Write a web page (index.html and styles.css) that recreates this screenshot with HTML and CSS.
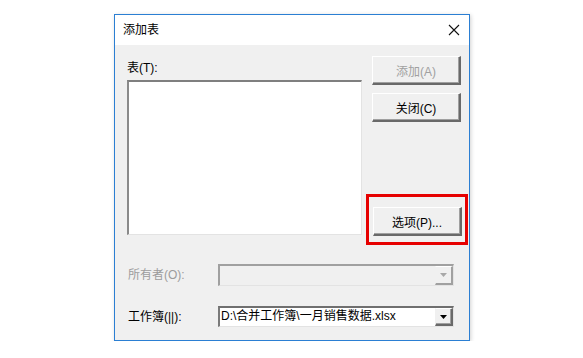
FILE: index.html
```html
<!DOCTYPE html>
<html lang="zh-CN">
<head>
<meta charset="utf-8">
<title>添加表</title>
<link rel="stylesheet" href="styles.css">
</head>
<body>
<div class="dialog">
  <div class="titlebar">
    <span class="title">添加表</span>
    <span class="close">
      <svg width="12" height="12" viewBox="0 0 12 12"><path d="M1 1 L11 11 M11 1 L1 11" stroke="#111" stroke-width="1.1" fill="none"/></svg>
    </span>
  </div>
  <div class="content">
    <div class="top">
      <div class="left">
        <div class="label">表(T):</div>
        <div class="listbox"></div>
      </div>
      <div class="right">
        <button class="btn disabled">添加(A)</button>
        <button class="btn">关闭(C)</button>
        <div class="highlight">
          <button class="btn">选项(P)...</button>
        </div>
      </div>
    </div>
    <div class="row row-owner">
      <span class="row-label disabled-text">所有者(O):</span>
      <div class="combo combo-disabled">
        <span class="combo-text"></span>
        <span class="combo-btn"><svg width="7" height="4" viewBox="0 0 7 4"><path d="M0 0 H7 L3.5 4 Z" fill="#a8a8a8"/></svg></span>
      </div>
    </div>
    <div class="row row-book">
      <span class="row-label">工作簿(||):</span>
      <div class="combo">
        <span class="combo-text">D:\合并工作簿\一月销售数据.xlsx</span>
        <span class="combo-btn"><svg width="7" height="4" viewBox="0 0 7 4"><path d="M0 0 H7 L3.5 4 Z" fill="#000"/></svg></span>
      </div>
    </div>
  </div>
</div>
</body>
</html>
```
FILE: styles.css
```css
* { box-sizing: border-box; }
html, body { margin: 0; padding: 0; background: #fff; }
body {
  font-family: "Liberation Sans", "Noto Sans CJK SC", sans-serif;
  font-size: 12px;
  color: #000;
}
.dialog {
  margin: 14px 0 0 114px;
  width: 356px;
  height: 327px;
  border: 1px solid #2b7fd3;
  background: #f0f0f0;
  box-shadow: 1px 1px 4px rgba(0,0,0,0.18);
  display: flex;
  flex-direction: column;
}
.titlebar {
  height: 30px;
  background: #fff;
  display: flex;
  align-items: center;
  justify-content: space-between;
  padding: 0 9px 0 8px;
}
.title { font-size: 12px; line-height: 16px; }
.close { display: flex; width: 12px; height: 12px; }
.content {
  padding: 11px 8px 0 12px;
  flex: 1;
  display: flex;
  flex-direction: column;
}
.top { display: flex; gap: 10px; align-items: flex-start; }
.left { width: 235px; padding-top: 4px; display: flex; flex-direction: column; }
.label { line-height: 16px; height: 16px; margin-bottom: 4px; }
.listbox {
  height: 155px;
  background: #fff;
  border-style: solid;
  border-width: 2px 1px 1px 2px;
  border-color: #7f7f7f #e3e3e3 #e3e3e3 #8a8a8a;
}
.right { width: 89px; display: flex; flex-direction: column; }
.btn {
  width: 89px;
  height: 29px;
  font: inherit;
  font-size: 12px;
  color: #000;
  background: #f0f0f0;
  border-style: solid;
  border-width: 1px 2px 2px 1px;
  border-color: #fff #696969 #696969 #fff;
  box-shadow: inset -1px -1px 0 #a0a0a0;
  padding: 0;
  margin: 0;
}
.btn + .btn { margin-top: 8px; }
.btn.disabled { color: #a0a0a0; }
.highlight {
  margin: 72px -7px -10px -6px;
  border: 3px solid #e60000;
  padding: 10px 4px 6px 4px;
}
.row { display: flex; align-items: center; }
.row-owner { margin-top: 29px; }
.row-book { margin-top: 20px; }
.row-label { width: 91px; line-height: 16px; padding-left: 1px; }
.disabled-text { color: #9c9c9c; }
.combo {
  width: 236px;
  height: 22px;
  display: flex;
  align-items: stretch;
  background: #fff;
  border-style: solid;
  border-width: 2px 1px 1px 2px;
  border-color: #6f6f6f #e3e3e3 #e3e3e3 #7a7a7a;
}
.row-book .combo { height: 21px; }
.combo-disabled { background: #f0f0f0; border-color: #a0a0a0 #e3e3e3 #e3e3e3 #a0a0a0; }
.combo-text { flex: 1; line-height: 17px; padding-left: 1px; white-space: nowrap; overflow: hidden; }
.combo-btn {
  width: 18px;
  display: flex;
  align-items: center;
  justify-content: center;
  background: #f0f0f0;
  border-style: solid;
  border-width: 1px 2px 2px 1px;
  border-color: #fff #696969 #696969 #f0f0f0;
  box-shadow: inset -1px -1px 0 #a0a0a0;
}
.combo-disabled .combo-btn { border-color: #fff #a0a0a0 #a0a0a0 #f0f0f0; box-shadow: none; }
```
